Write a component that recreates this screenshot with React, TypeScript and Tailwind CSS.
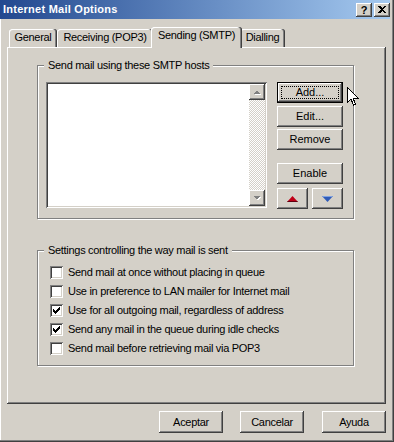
import type { ReactNode } from "react";

// classic 3d bevels
const raised =
  "shadow-[inset_-1px_-1px_#404040,inset_1px_1px_#ffffff,inset_-2px_-2px_#808080]";
const sunken =
  "shadow-[inset_1px_1px_#808080,inset_-1px_-1px_#ffffff,inset_2px_2px_#404040,inset_-2px_-2px_#d4d0c8]";
const etched = "border border-[#808080] shadow-[inset_1px_1px_#ffffff,1px_1px_#ffffff]";

function Button({
  children,
  className = "",
  isDefault = false,
}: {
  children: ReactNode;
  className?: string;
  isDefault?: boolean;
}) {
  if (isDefault) {
    return (
      <div className={`flex border border-black bg-[#d4d0c8] ${raised} ${className}`}>
        <span className="m-[3px] flex flex-1 items-center justify-center border border-dotted border-black">
          {children}
        </span>
      </div>
    );
  }
  return (
    <div className={`flex items-center justify-center bg-[#d4d0c8] ${raised} ${className}`}>
      {children}
    </div>
  );
}

function Tab({ label, selected = false, className = "" }: { label: string; selected?: boolean; className?: string }) {
  if (selected) {
    return (
      <div
        className={`relative z-10 -mx-[2px] -mb-[1px] flex h-[21px] justify-center rounded-t-[3px] bg-[#d4d0c8] pt-[2px] shadow-[inset_-1px_0_#404040,inset_-2px_0_#808080,inset_1px_1px_#ffffff] ${className}`}
      >
        {label}
      </div>
    );
  }
  return (
    <div
      className={`flex h-[18px] justify-center rounded-t-[3px] bg-[#d4d0c8] pt-[2px] shadow-[inset_-1px_0_#404040,inset_-2px_0_#808080,inset_1px_1px_#ffffff] ${className}`}
    >
      {label}
    </div>
  );
}

function ScrollArrow({ down = false }: { down?: boolean }) {
  return (
    <div className={`flex h-[16px] w-[16px] items-center justify-center bg-[#d4d0c8] ${raised}`}>
      <svg width="16" height="16" viewBox="0 0 16 16" shapeRendering="crispEdges">
        {down ? (
          <>
            <polygon points="5,7 12,7 8.5,10.5" fill="#ffffff" />
            <polygon points="4,6 11,6 7.5,9.5" fill="#808080" />
          </>
        ) : (
          <>
            <polygon points="5,11 12,11 8.5,7.5" fill="#ffffff" />
            <polygon points="4,10 11,10 7.5,6.5" fill="#808080" />
          </>
        )}
      </svg>
    </div>
  );
}

function Checkbox({ checked, label }: { checked: boolean; label: string }) {
  return (
    <div className="flex h-[19px] items-center">
      <div className={`h-[13px] w-[13px] bg-white ${sunken}`}>
        {checked && (
          <svg width="13" height="13" viewBox="0 0 13 13" shapeRendering="crispEdges">
            <path d="M3 5 L5 7 L10 2 L10 5 L5 10 L3 8 Z" fill="#000000" />
          </svg>
        )}
      </div>
      <span className="ml-[5px] tracking-[-0.3px]">{label}</span>
    </div>
  );
}

export default function App() {
  return (
    <div className="relative flex h-[442px] w-[394px] select-none flex-col bg-[#d4d0c8] font-['Liberation_Sans',Arial,sans-serif] text-[11px] leading-[13px] text-black shadow-[inset_-1px_-1px_#404040,inset_-2px_-2px_#808080,inset_1px_0_#ffffff]">
      {/* title bar */}
      <div className="flex h-[19px] w-[390px] items-center bg-linear-to-r from-[#23488f] to-[#a6caf0] pl-[3px]">
        <span className="flex-1 font-bold tracking-[0.25px] text-white">Internet Mail Options</span>
        <div className="flex gap-[2px]">
          <div className={`flex h-[14px] w-[16px] items-center justify-center bg-[#d4d0c8] pt-[1px] font-bold ${raised}`}>
            ?
          </div>
          <div className={`flex h-[14px] w-[16px] items-center justify-center bg-[#d4d0c8] ${raised}`}>
            <svg width="8" height="7" viewBox="0 0 8 7" shapeRendering="crispEdges">
              <path d="M0 0 H2 L4 2 L6 0 H8 L5 3.5 L8 7 H6 L4 5 L2 7 H0 L3 3.5 Z" fill="#000000" />
            </svg>
          </div>
        </div>
      </div>

      <div className="flex flex-col pl-[7px] pr-[8px] pt-[8px]">
        {/* tabs */}
        <div className="flex h-[20px] items-end pl-[2px] tracking-[-0.3px]">
          <Tab label="General" className="w-[48px]" />
          <Tab label="Receiving (POP3)" className="w-[96px]" />
          <Tab label="Sending (SMTP)" selected className="w-[91px]" />
          <Tab label="Dialling" className="w-[45px]" />
        </div>

        {/* tab page */}
        <div className={`flex h-[357px] flex-col items-start bg-[#d4d0c8] ${raised}`}>
          <fieldset className={`ml-[30px] mt-[12px] w-[317px] ${etched}`}>
            <legend className="ml-[6px] bg-[#d4d0c8] px-[4px] tracking-[-0.3px]">
              Send mail using these SMTP hosts
            </legend>
            <div className="flex pb-[9px] pl-[8px] pt-[10px]">
              <div className={`flex h-[126px] w-[221px] justify-end bg-white p-[2px] ${sunken}`}>
                <div className="flex w-[16px] flex-col justify-between bg-[repeating-conic-gradient(#ffffff_0_25%,#d4d0c8_0_50%)] bg-[length:2px_2px]">
                  <ScrollArrow />
                  <ScrollArrow down />
                </div>
              </div>
              <div className="ml-[10px] flex w-[66px] flex-col">
                <Button isDefault className="h-[21px]">
                  Add...
                </Button>
                <Button className="mt-[3px] h-[21px]">Edit...</Button>
                <Button className="mt-[2px] h-[21px]">Remove</Button>
                <Button className="mt-[13px] h-[21px]">Enable</Button>
                <div className="mt-[4px] flex justify-between">
                  <Button className="h-[21px] w-[31px]">
                    <svg width="11" height="6" viewBox="0 0 11 6">
                      <polygon points="0,6 5.5,0 11,6" fill="#c00018" />
                      <polygon points="0,6 11,6 10,5 1,5" fill="#600010" />
                    </svg>
                  </Button>
                  <Button className="h-[21px] w-[31px]">
                    <svg width="11" height="6" viewBox="0 0 11 6">
                      <polygon points="0,0 11,0 5.5,6" fill="#2f5bb8" />
                      <polygon points="0,0 11,0 10,1 1,1" fill="#7fa2e0" />
                    </svg>
                  </Button>
                </div>
              </div>
            </div>
          </fieldset>

          <fieldset className={`ml-[30px] mt-[25px] w-[317px] ${etched}`}>
            <legend className="ml-[6px] bg-[#d4d0c8] px-[4px] tracking-[-0.3px]">
              Settings controlling the way mail is sent
            </legend>
            <div className="flex flex-col pb-[7px] pl-[12px] pt-[6px]">
              <Checkbox checked={false} label="Send mail at once without placing in queue" />
              <Checkbox checked={false} label="Use in preference to LAN mailer for Internet mail" />
              <Checkbox checked label="Use for all outgoing mail, regardless of address" />
              <Checkbox checked label="Send any mail in the queue during idle checks" />
              <Checkbox checked={false} label="Send mail before retrieving mail via POP3" />
            </div>
          </fieldset>
        </div>

        {/* dialog buttons */}
        <div className="mt-[7px] flex justify-end tracking-[-0.3px]">
          <Button className="mr-[17px] h-[22px] w-[64px]">Aceptar</Button>
          <Button className="mr-[18px] h-[22px] w-[64px]">Cancelar</Button>
          <Button className="h-[22px] w-[64px]">Ayuda</Button>
        </div>
      </div>

      {/* mouse pointer */}
      <svg
        className="absolute left-[347px] top-[87px]"
        width="12"
        height="19"
        viewBox="0 0 12 19"
        shapeRendering="crispEdges"
      >
        <path d="M0.5 0.5 V15.5 L4 12 L6.5 18 L8.5 17 L6 11 H11 Z" fill="#ffffff" stroke="#000000" />
      </svg>
    </div>
  );
}
